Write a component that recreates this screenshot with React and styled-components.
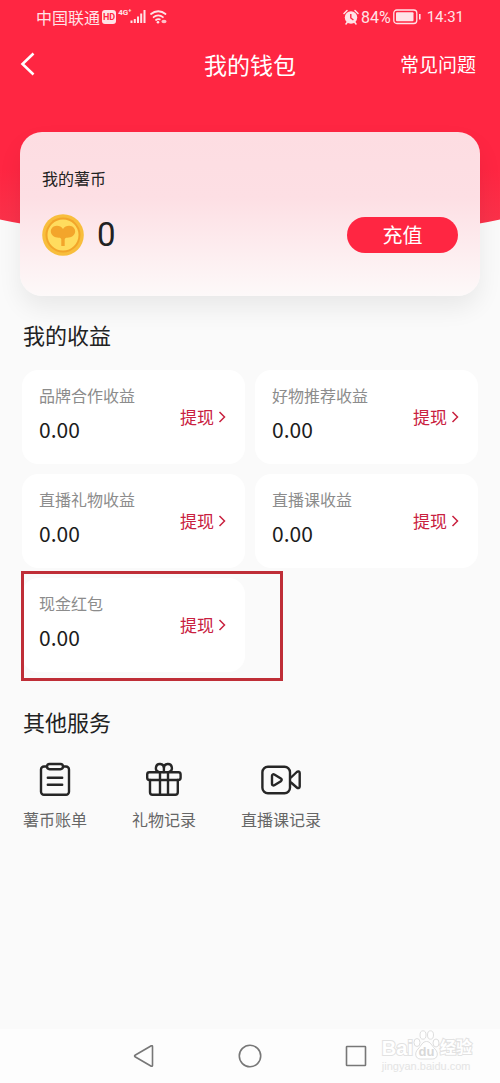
import React from 'react'
import styled, { createGlobalStyle } from 'styled-components'

const earnings = [
  { id: 'brand', label: '品牌合作收益', amount: '0.00' },
  { id: 'goods', label: '好物推荐收益', amount: '0.00' },
  { id: 'gift', label: '直播礼物收益', amount: '0.00' },
  { id: 'course', label: '直播课收益', amount: '0.00' },
  { id: 'cash', label: '现金红包', amount: '0.00', marked: true },
]

const StatusIcons = () => (
  <svg width="38" height="18" viewBox="0 0 38 18" fill="none" stroke="#ffe3e7" aria-hidden="true">
    <path d="M1.500 12.500v2.500M4.800 11v4M8 8.500v6.500M11.200 5.500v9.500M14.500 2v13" strokeWidth="2" />
    <g strokeWidth="1.800" strokeLinecap="round">
      <path d="M21 6a11 11 0 0 1 14.500 0M23.600 9.200a7 7 0 0 1 9.300 0M26 12a3.500 3.500 0 0 1 3.800-.6" />
    </g>
    <circle cx="28" cy="14.300" r="1.300" fill="#ffe3e7" stroke="none" />
    <ellipse cx="34" cy="13.500" rx="2.600" ry="1.800" fill="#ffc0c8" stroke="none" />
  </svg>
)

const AlarmIcon = () => (
  <svg width="16" height="16" viewBox="0 0 16 16" fill="none" aria-hidden="true">
    <circle cx="8" cy="8.500" r="6.200" fill="#ffe3e7" />
    <path d="M1 4.500 4 1.500M15 4.500l-3-3M3 15l1.500-2M13 15l-1.500-2" stroke="#ffe3e7" strokeWidth="1.500" strokeLinecap="round" />
    <path d="M7.800 5v4l2.600 2" stroke="#ff2642" strokeWidth="1.400" />
  </svg>
)

const BatteryIcon = () => (
  <svg width="28" height="16" viewBox="0 0 28 16" fill="none" aria-hidden="true">
    <rect x=".8" y="1" width="23" height="13.500" rx="3" stroke="#ffe3e7" strokeWidth="1.300" />
    <rect x="3" y="3.200" width="17.500" height="9" rx="1" fill="#ffe3e7" />
    <path d="M26.800 5v5.500" stroke="#ffe3e7" strokeWidth="1.600" />
  </svg>
)

const BackIcon = () => (
  <svg width="16" height="24" viewBox="0 0 16 24" fill="none" stroke="#fff" strokeWidth="2.600" aria-hidden="true">
    <path d="M13.500 1.500 2.500 12l11 10.500" />
  </svg>
)

const CoinIcon = () => (
  <svg width="42" height="42" viewBox="0 0 42 42" aria-hidden="true">
    <circle cx="21" cy="21" r="20.800" fill="#f8be3c" />
    <circle cx="21" cy="21" r="17.500" fill="#f2a52a" />
    <circle cx="21" cy="21" r="15.500" fill="#ffdc5e" />
    <path d="M21 15c1.500-2.200 3.800-3.300 6.300-3.200 3.500.2 6 2.700 5.900 5.800-.2 3.700-3.500 6.100-8 6.200-1.600 0-2.400.6-2.500 1.800V32h-3.400v-6.400c-.1-1.200-.9-1.800-2.500-1.800-4.500-.1-7.800-2.500-8-6.200-.1-3.100 2.400-5.600 5.900-5.800 2.500-.1 4.800 1 6.300 3.200z" fill="#f3a52b" />
  </svg>
)

const ChevronIcon = () => (
  <svg width="8" height="12" viewBox="0 0 8 12" fill="none" stroke="currentColor" strokeWidth="1.500" aria-hidden="true">
    <path d="M1.500 1 6.500 6l-5 5" />
  </svg>
)

const ServiceIcon = ({ children }) => (
  <svg
    width="40"
    height="40"
    viewBox="0 0 40 40"
    fill="none"
    stroke="#262626"
    strokeWidth="2.400"
    strokeLinecap="round"
    strokeLinejoin="round"
    aria-hidden="true"
  >
    {children}
  </svg>
)

const BillIcon = () => (
  <ServiceIcon>
    <path d="M11.500 6.500H9A3 3 0 0 0 6 9.500v22.300a3 3 0 0 0 3 3h22a3 3 0 0 0 3-3V9.500a3 3 0 0 0-3-3h-2.500" />
    <rect x="12" y="4" width="16" height="5.200" rx="2.600" />
    <path d="M12.800 17.800h14.400M12.800 24.800h14.400" />
  </ServiceIcon>
)

const GiftIcon = () => (
  <ServiceIcon>
    <rect x="3.200" y="12.200" width="33.400" height="7.800" rx="2.200" />
    <path d="M6 20v12.300a2.500 2.500 0 0 0 2.500 2.500h22.800a2.500 2.500 0 0 0 2.500-2.500V20M16 12.200v22.600M24 12.200v22.600" />
    <path d="M19.900 8a4 4 0 1 0-5.200 3.800M19.900 8a4 4 0 1 1 5.200 3.800M19.900 8v4" />
  </ServiceIcon>
)

const VideoIcon = () => (
  <ServiceIcon>
    <rect x="1.400" y="6.800" width="27.600" height="26.400" rx="5.500" />
    <path d="M30 17.500 35.800 12c1.300-1.100 2.900-.6 2.900 1v13.500c0 1.600-1.600 2.100-2.900 1L30 22.500" />
    <path d="M11 15.800c0-1.300 1.200-1.900 2.300-1.300l6.600 4c1.100.7 1.100 2 0 2.700l-6.600 4c-1.100.6-2.300 0-2.300-1.300z" />
  </ServiceIcon>
)

const PawIcon = () => (
  <PawSvg width="27" height="30" viewBox="0 0 27 30" aria-hidden="true">
    <ellipse cx="4" cy="12.500" rx="3" ry="4" />
    <ellipse cx="10" cy="5" rx="3" ry="4.200" />
    <ellipse cx="17.500" cy="5" rx="3" ry="4.200" />
    <ellipse cx="23" cy="13" rx="3" ry="4" />
    <path d="M13.500 11.500c4 0 5 4 8.500 7.500 4 4 2.500 10-2.500 10h-12c-5 0-6.500-6-2.500-10 3.500-3.500 4.500-7.500 8.500-7.500z" />
    <text x="13.500" y="26" textAnchor="middle">du</text>
  </PawSvg>
)

const services = [
  { id: 'bill', label: '薯币账单', Icon: BillIcon },
  { id: 'gift', label: '礼物记录', Icon: GiftIcon },
  { id: 'course', label: '直播课记录', Icon: VideoIcon },
]

const App = () => {
  return (
    <Page>
      <GlobalStyle />
      <Hero>
        <StatusBar>
          <StatusGroup>
            <Carrier>中国联通</Carrier>
            <HdBadge>HD</HdBadge>
            <Network>4G⁺</Network>
            <StatusIcons />
          </StatusGroup>
          <StatusGroup>
            <AlarmIcon />
            <Battery>84%</Battery>
            <BatteryIcon />
            <Clock>14:31</Clock>
          </StatusGroup>
        </StatusBar>
        <NavBar>
          <BackButton type="button" aria-label="返回">
            <BackIcon />
          </BackButton>
          <Title>我的钱包</Title>
          <HelpLink href="#">常见问题</HelpLink>
        </NavBar>
        <BalanceCard>
          <BalanceLabel>我的薯币</BalanceLabel>
          <BalanceRow>
            <CoinIcon />
            <Balance>0</Balance>
            <RechargeButton type="button">充值</RechargeButton>
          </BalanceRow>
        </BalanceCard>
      </Hero>
      <Main>
        <SectionTitle>我的收益</SectionTitle>
        <EarningGrid>
          {earnings.map(({ id, label, amount, marked }) => (
            <EarningCard key={id}>
              <div>
                <EarningLabel>{label}</EarningLabel>
                <Amount>{amount}</Amount>
              </div>
              <WithdrawLink href="#">
                提现
                <ChevronIcon />
              </WithdrawLink>
              {marked && <Marker />}
            </EarningCard>
          ))}
        </EarningGrid>
        <SectionTitle>其他服务</SectionTitle>
        <ServiceList>
          {services.map(({ id, label, Icon }) => (
            <li key={id}>
              <ServiceLink href="#">
                <Icon />
                {label}
              </ServiceLink>
            </li>
          ))}
        </ServiceList>
      </Main>
      <SystemBar>
        <SystemButton type="button" aria-label="后退">
          <svg width="24" height="24" viewBox="0 0 24 24">
            <path d="M20.500 2.500v19a.8.8 0 0 1-1.200.7L3 12.700a.8.8 0 0 1 0-1.400l16.300-9.500a.8.8 0 0 1 1.200.7z" />
          </svg>
        </SystemButton>
        <SystemButton type="button" aria-label="主页">
          <svg width="24" height="24" viewBox="0 0 24 24">
            <circle cx="12" cy="12" r="10.700" />
          </svg>
        </SystemButton>
        <SystemButton type="button" aria-label="最近任务">
          <svg width="24" height="24" viewBox="0 0 24 24">
            <rect x="2.500" y="2.500" width="19" height="19" rx=".5" />
          </svg>
        </SystemButton>
        <Watermark>
          <WatermarkLogo>
            <span>Bai</span>
            <PawIcon />
            <WatermarkName>经验</WatermarkName>
          </WatermarkLogo>
          <WatermarkSite>jingyan.baidu.com</WatermarkSite>
        </Watermark>
      </SystemBar>
    </Page>
  )
}

const GlobalStyle = createGlobalStyle`
  * {
    box-sizing: border-box;
  }
  body {
    margin: 0;
    background: #fafafa;
    color: #222;
    font-family: 'Noto Sans CJK SC', sans-serif;
  }
  h1, h2, p, ul {
    margin: 0;
    padding: 0;
    font-weight: 400;
  }
  ul {
    list-style: none;
  }
  a {
    color: inherit;
    text-decoration: none;
  }
  button {
    padding: 0;
    border: 0;
    background: none;
    font: inherit;
  }
  svg {
    display: block;
    flex: none;
  }
`

const Page = styled.div`
  display: flex;
  flex-direction: column;
  min-height: 100vh;
  overflow: hidden;
`

const Hero = styled.header`
  position: relative;
  z-index: 0;
  color: #fff;
  &::before {
    content: '';
    position: absolute;
    z-index: -1;
    top: 0;
    bottom: 55px;
    left: -25%;
    width: 150%;
    border-radius: 0 0 50% 50% / 0 0 84px 84px;
    background: linear-gradient(#ff2642 70%, #f8364d);
  }
`

const StatusBar = styled.div`
  display: flex;
  align-items: center;
  justify-content: space-between;
  height: 34px;
  padding: 0 36px;
  color: #ffe3e7;
  font-family: Roboto, 'Noto Sans CJK SC', sans-serif;
  font-size: 15px;
`

const StatusGroup = styled.div`
  display: flex;
  align-items: center;
  gap: 2px;
`

const Carrier = styled.span`
  font-family: 'Noto Sans CJK SC', sans-serif;
  font-size: 16px;
  line-height: 20px;
`

const HdBadge = styled.span`
  padding: 0 1px;
  border-radius: 3px;
  background: #ffe3e7;
  color: #ff2642;
  font-size: 9px;
  font-weight: 700;
  line-height: 14px;
`

const Network = styled.span`
  align-self: flex-start;
  margin-right: -4px;
  font-size: 8px;
  font-weight: 700;
  line-height: 12px;
`

const Battery = styled.span`
  font-size: 16px;
`

const Clock = styled.span`
  margin-left: 4px;
`

const NavBar = styled.nav`
  display: grid;
  grid-template-columns: 1fr auto 1fr;
  align-items: center;
  height: 59px;
  padding: 0 24px;
`

const BackButton = styled.button`
  justify-self: start;
  margin-left: -4px;
`

const Title = styled.h1`
  font-size: 23px;
  line-height: 32px;
`

const HelpLink = styled.a`
  justify-self: end;
  font-size: 19px;
  line-height: 28px;
`

const BalanceCard = styled.section`
  margin: 39px 20px 0;
  height: 164px;
  padding: 33px 22px 0;
  border-radius: 22px;
  background: linear-gradient(#fddde2, #fddfe4 40%, #fdf9f9);
  box-shadow: 0 12px 24px rgba(0, 0, 0, 0.07);
  color: #222;
`

const BalanceLabel = styled.p`
  font-size: 16px;
  line-height: 26px;
`

const BalanceRow = styled.div`
  display: flex;
  align-items: center;
  margin-top: 23px;
`

const Balance = styled.span`
  margin-left: 13px;
  font-family: Roboto, sans-serif;
  font-size: 33px;
  line-height: 42px;
`

const RechargeButton = styled.button`
  width: 111px;
  height: 36px;
  margin-left: auto;
  border-radius: 18px;
  background: #ff2642;
  color: #fff;
  font-size: 20px;
  line-height: 36px;
`

const Main = styled.main`
  flex: 1;
  padding: 22px;
`

const SectionTitle = styled.h2`
  padding-left: 1px;
  font-size: 22px;
  line-height: 32px;
`

const EarningGrid = styled.ul`
  display: grid;
  grid-template-columns: 1fr 1fr;
  gap: 10px;
  margin: 20px 0 33px;
`

const EarningCard = styled.li`
  position: relative;
  display: flex;
  align-items: center;
  justify-content: space-between;
  height: 94px;
  padding: 0 19px 0 17px;
  border-radius: 16px;
  background: #fff;
`

const EarningLabel = styled.p`
  color: #8c8c8c;
  font-size: 16px;
  line-height: 24px;
`

const Amount = styled.p`
  margin: 8px 0;
  color: #1c1c1c;
  font-size: 21px;
  line-height: 28px;
`

const WithdrawLink = styled.a`
  display: flex;
  align-items: center;
  gap: 4px;
  color: #c9213f;
  font-size: 17px;
  line-height: 24px;
`

const Marker = styled.span`
  position: absolute;
  inset: -7px -38px -9px -1px;
  border: 3px solid #bf2e37;
  pointer-events: none;
`

const ServiceList = styled.ul`
  display: flex;
  gap: 45px;
  margin-top: 23px;
  padding-left: 1px;
`

const ServiceLink = styled.a`
  display: flex;
  flex-direction: column;
  align-items: center;
  gap: 6px;
  color: #666;
  font-size: 16px;
  line-height: 26px;
`

const SystemBar = styled.footer`
  position: relative;
  display: flex;
  align-items: center;
  justify-content: center;
  gap: 82px;
  height: 54px;
  background: #fdfdfd;
`

const SystemButton = styled.button`
  svg {
    fill: none;
    stroke: #777;
    stroke-width: 1.6px;
  }
`

const Watermark = styled.div`
  position: absolute;
  right: 28px;
  bottom: 11px;
  color: #fff;
  font-family: 'Liberation Sans', 'Noto Sans CJK SC', sans-serif;
  font-weight: 700;
`

const WatermarkLogo = styled.div`
  display: flex;
  align-items: flex-end;
  font-size: 20px;
  line-height: 24px;
  span {
    paint-order: stroke fill;
    -webkit-text-stroke: 2px #e2e2e2;
  }
`

const WatermarkName = styled.span`
  font-size: 16px;
`

const WatermarkSite = styled.p`
  color: #e4e4e4;
  font-size: 11px;
  font-weight: 400;
  line-height: 12px;
`

const PawSvg = styled.svg`
  fill: #fff;
  stroke: #dedede;
  text {
    fill: #d8d8d8;
    stroke: none;
    font-size: 13px;
  }
`

export default App
